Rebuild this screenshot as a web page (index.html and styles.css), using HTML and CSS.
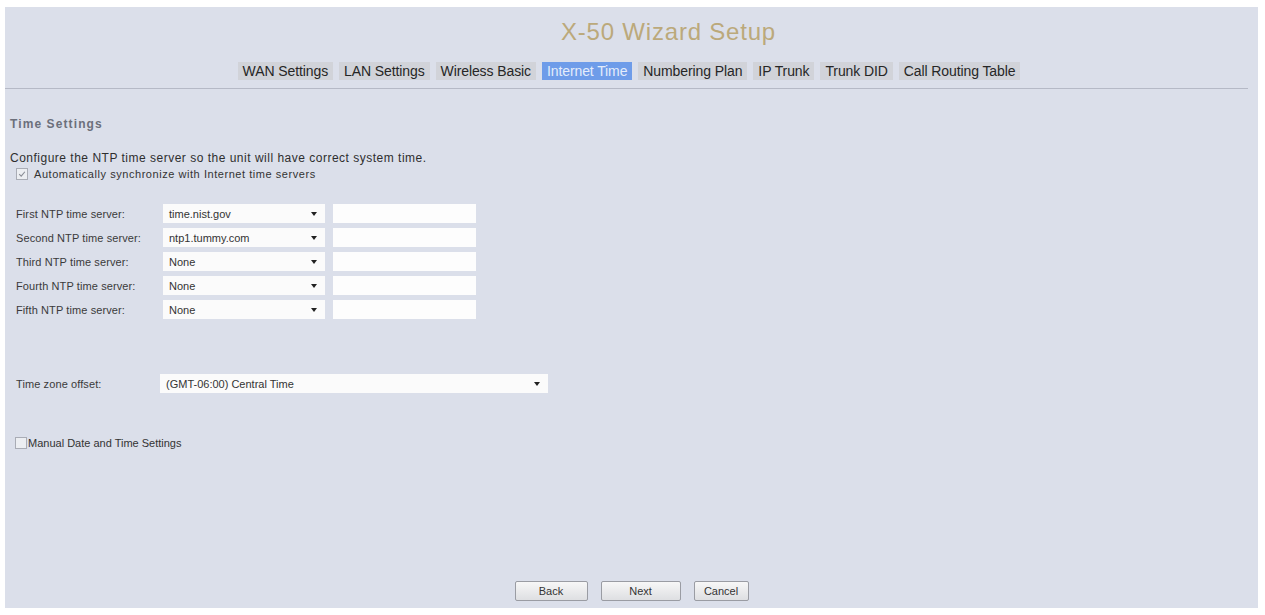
FILE: index.html
```html
<!DOCTYPE html>
<html lang="en">
<head>
<meta charset="utf-8">
<title>X-50 Wizard Setup</title>
<link rel="stylesheet" href="styles.css">
</head>
<body>
<div class="panel">
  <header class="head">
    <h1 class="title">X-50 Wizard Setup</h1>
    <nav class="tabs">
      <span class="tab">WAN Settings</span>
      <span class="tab">LAN Settings</span>
      <span class="tab">Wireless Basic</span>
      <span class="tab active">Internet Time</span>
      <span class="tab">Numbering Plan</span>
      <span class="tab">IP Trunk</span>
      <span class="tab">Trunk DID</span>
      <span class="tab">Call Routing Table</span>
    </nav>
  </header>

  <main class="content">
    <h2 class="section-title">Time Settings</h2>
    <p class="desc">Configure the NTP time server so the unit will have correct system time.</p>
    <label class="check auto"><span class="box"><svg viewBox="0 0 10 10" width="8" height="8"><path d="M1.5 5.2 L4 7.6 L8.6 2.2" fill="none" stroke="#8a8d96" stroke-width="1.4"/></svg></span>Automatically synchronize with Internet time servers</label>

    <div class="servers">
      <div class="row">
        <span class="label">First NTP time server:</span>
        <div class="select"><span class="value">time.nist.gov</span><span class="arrow"></span></div>
        <input class="field" type="text">
      </div>
      <div class="row">
        <span class="label">Second NTP time server:</span>
        <div class="select"><span class="value">ntp1.tummy.com</span><span class="arrow"></span></div>
        <input class="field" type="text">
      </div>
      <div class="row">
        <span class="label">Third NTP time server:</span>
        <div class="select"><span class="value">None</span><span class="arrow"></span></div>
        <input class="field" type="text">
      </div>
      <div class="row">
        <span class="label">Fourth NTP time server:</span>
        <div class="select"><span class="value">None</span><span class="arrow"></span></div>
        <input class="field" type="text">
      </div>
      <div class="row">
        <span class="label">Fifth NTP time server:</span>
        <div class="select"><span class="value">None</span><span class="arrow"></span></div>
        <input class="field" type="text">
      </div>
    </div>

    <div class="row tz">
      <span class="label">Time zone offset:</span>
      <div class="select wide"><span class="value">(GMT-06:00) Central Time</span><span class="arrow"></span></div>
    </div>

    <label class="check manual"><span class="box"></span>Manual Date and Time Settings</label>
  </main>

  <footer class="actions">
    <button class="btn back" type="button">Back</button>
    <button class="btn next" type="button">Next</button>
    <button class="btn cancel" type="button">Cancel</button>
  </footer>
</div>
</body>
</html>
```

FILE: styles.css
```css
html, body {
  margin: 0;
  padding: 0;
  background: #ffffff;
}

body {
  font-family: "Liberation Sans", Arial, sans-serif;
  color: #333;
}

.panel {
  margin: 7px 7px 0 5px;
  width: 1253px;
  height: 601px;
  background: #dbdfea;
  display: flex;
  flex-direction: column;
  box-sizing: border-box;
}

.head {
  margin-right: 10px;
  padding: 12px 0 8px;
  border-bottom: 1px solid #b5b9c6;
  display: flex;
  flex-direction: column;
  align-items: center;
}

.title {
  margin: 0 0 0 84px;
  font-size: 24px;
  line-height: 26px;
  font-weight: normal;
  letter-spacing: 0.8px;
  color: #bba97b;
}

.tabs {
  margin-top: 17px;
  margin-left: 5px;
  display: flex;
  gap: 6px;
}

.tab {
  display: block;
  height: 18px;
  line-height: 18px;
  padding: 0 5px;
  font-size: 14px;
  color: #262626;
  background: #d1d3d9;
  letter-spacing: -0.1px;
}

.tab.active {
  background: #6e9ce9;
  color: #e4ecfb;
}

.content {
  flex: 1;
  padding: 0 0 0 5px;
}

.section-title {
  margin: 28px 0 0;
  font-size: 12px;
  line-height: 14px;
  font-weight: bold;
  letter-spacing: 1.1px;
  color: #6b6f7b;
}

.desc {
  margin: 20px 0 0;
  font-size: 12px;
  line-height: 15px;
  letter-spacing: 0.5px;
  color: #2e2e2e;
}

.check {
  display: flex;
  align-items: center;
  gap: 6px;
  font-size: 11px;
  line-height: 16px;
  color: #333;
}

.check.auto {
  margin-left: 6px;
  letter-spacing: 0.55px;
}

.box {
  width: 10px;
  height: 10px;
  border: 1px solid #a9acb5;
  background: #eceef2;
  display: flex;
  align-items: center;
  justify-content: center;
}

.servers {
  margin-top: 22px;
  display: flex;
  flex-direction: column;
  gap: 5px;
}

.row {
  display: flex;
  align-items: center;
  padding-left: 6px;
  height: 19px;
}

.label {
  width: 147px;
  font-size: 11px;
  color: #3a3a3a;
  letter-spacing: 0.1px;
}

.select {
  width: 162px;
  height: 19px;
  box-sizing: border-box;
  background: #fbfbfb;
  display: flex;
  align-items: center;
  justify-content: space-between;
  padding: 0 8px 0 6px;
  font-size: 11px;
  color: #333;
}

.select.wide {
  width: 388px;
}

.arrow {
  width: 0;
  height: 0;
  border-left: 3px solid transparent;
  border-right: 3px solid transparent;
  border-top: 4px solid #222;
}

.field {
  margin: 0 0 0 8px;
  width: 143px;
  height: 19px;
  box-sizing: border-box;
  border: none;
  padding: 0;
  background: #fdfdfd;
}

.tz {
  margin-top: 55px;
}

.tz .label {
  width: 144px;
}

.check.manual {
  margin-top: 42px;
  margin-left: 5px;
  gap: 1px;
}

.actions {
  display: flex;
  justify-content: center;
  gap: 13px;
  padding: 0 0 7px 0;
}

.btn {
  height: 20px;
  box-sizing: border-box;
  padding: 0;
  font-family: "Liberation Sans", Arial, sans-serif;
  font-size: 11px;
  color: #333;
  background: linear-gradient(#f7f7f7, #dedfe2);
  border: 1px solid #9a9ca3;
  border-radius: 2px;
}

.btn.back { width: 73px; }
.btn.next { width: 80px; }
.btn.cancel { width: 55px; }
```
